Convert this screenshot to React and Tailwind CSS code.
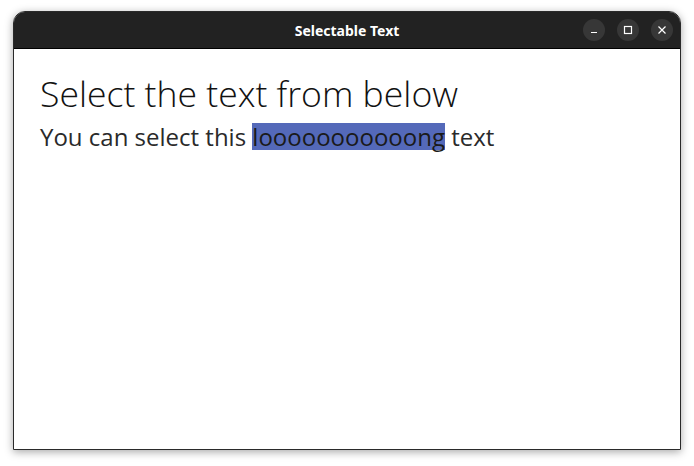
import React from "react";

const WinButton = ({ children }) => (
  <button className="w-[22px] h-[22px] rounded-full bg-[#373737] flex items-center justify-center text-white">
    {children}
  </button>
);

const App = () => {
  return (
    <div className="w-[694px] h-[466px] bg-white pl-[13px] pt-[11px]">
      <div className="w-[668px] h-[439px] flex flex-col rounded-t-[12px] overflow-hidden shadow-[0_2px_8px_rgba(0,0,0,0.35)] border border-[#2a2a2a]">
        <div className="h-[37px] bg-[#222222] border-b border-black flex items-center relative">
          <div className="flex-1 text-center text-white text-[14px] font-bold font-['Noto_Sans',sans-serif]">
            Selectable Text
          </div>
          <div className="absolute right-[7px] top-[7px] flex gap-[12px]">
            <WinButton>
              <svg width="10" height="10" viewBox="0 0 10 10">
                <path d="M2 7.5h6" stroke="white" strokeWidth="1.2" />
              </svg>
            </WinButton>
            <WinButton>
              <svg width="10" height="10" viewBox="0 0 10 10">
                <rect x="1.5" y="1.5" width="7" height="7" fill="none" stroke="white" strokeWidth="1.2" />
              </svg>
            </WinButton>
            <WinButton>
              <svg width="10" height="10" viewBox="0 0 10 10">
                <path d="M1.5 1.5l7 7M8.5 1.5l-7 7" stroke="white" strokeWidth="1.2" />
              </svg>
            </WinButton>
          </div>
        </div>
        <div className="flex-1 bg-white px-[26px] pt-[22px] font-['Open_Sans',sans-serif] font-light">
          <div className="text-[35.6px] leading-[44px] text-[#111]">Select the text from below</div>
          <div className="mt-[8px] text-[24px] leading-[27px] text-[#2a2a2a] font-normal">
            You can select this{" "}
            <span className="inline-block h-[27px] leading-[27px] bg-[#5469b9] text-[#1a1a1a]">looooooooooong</span> text
          </div>
        </div>
      </div>
    </div>
  );
};

export default App;
